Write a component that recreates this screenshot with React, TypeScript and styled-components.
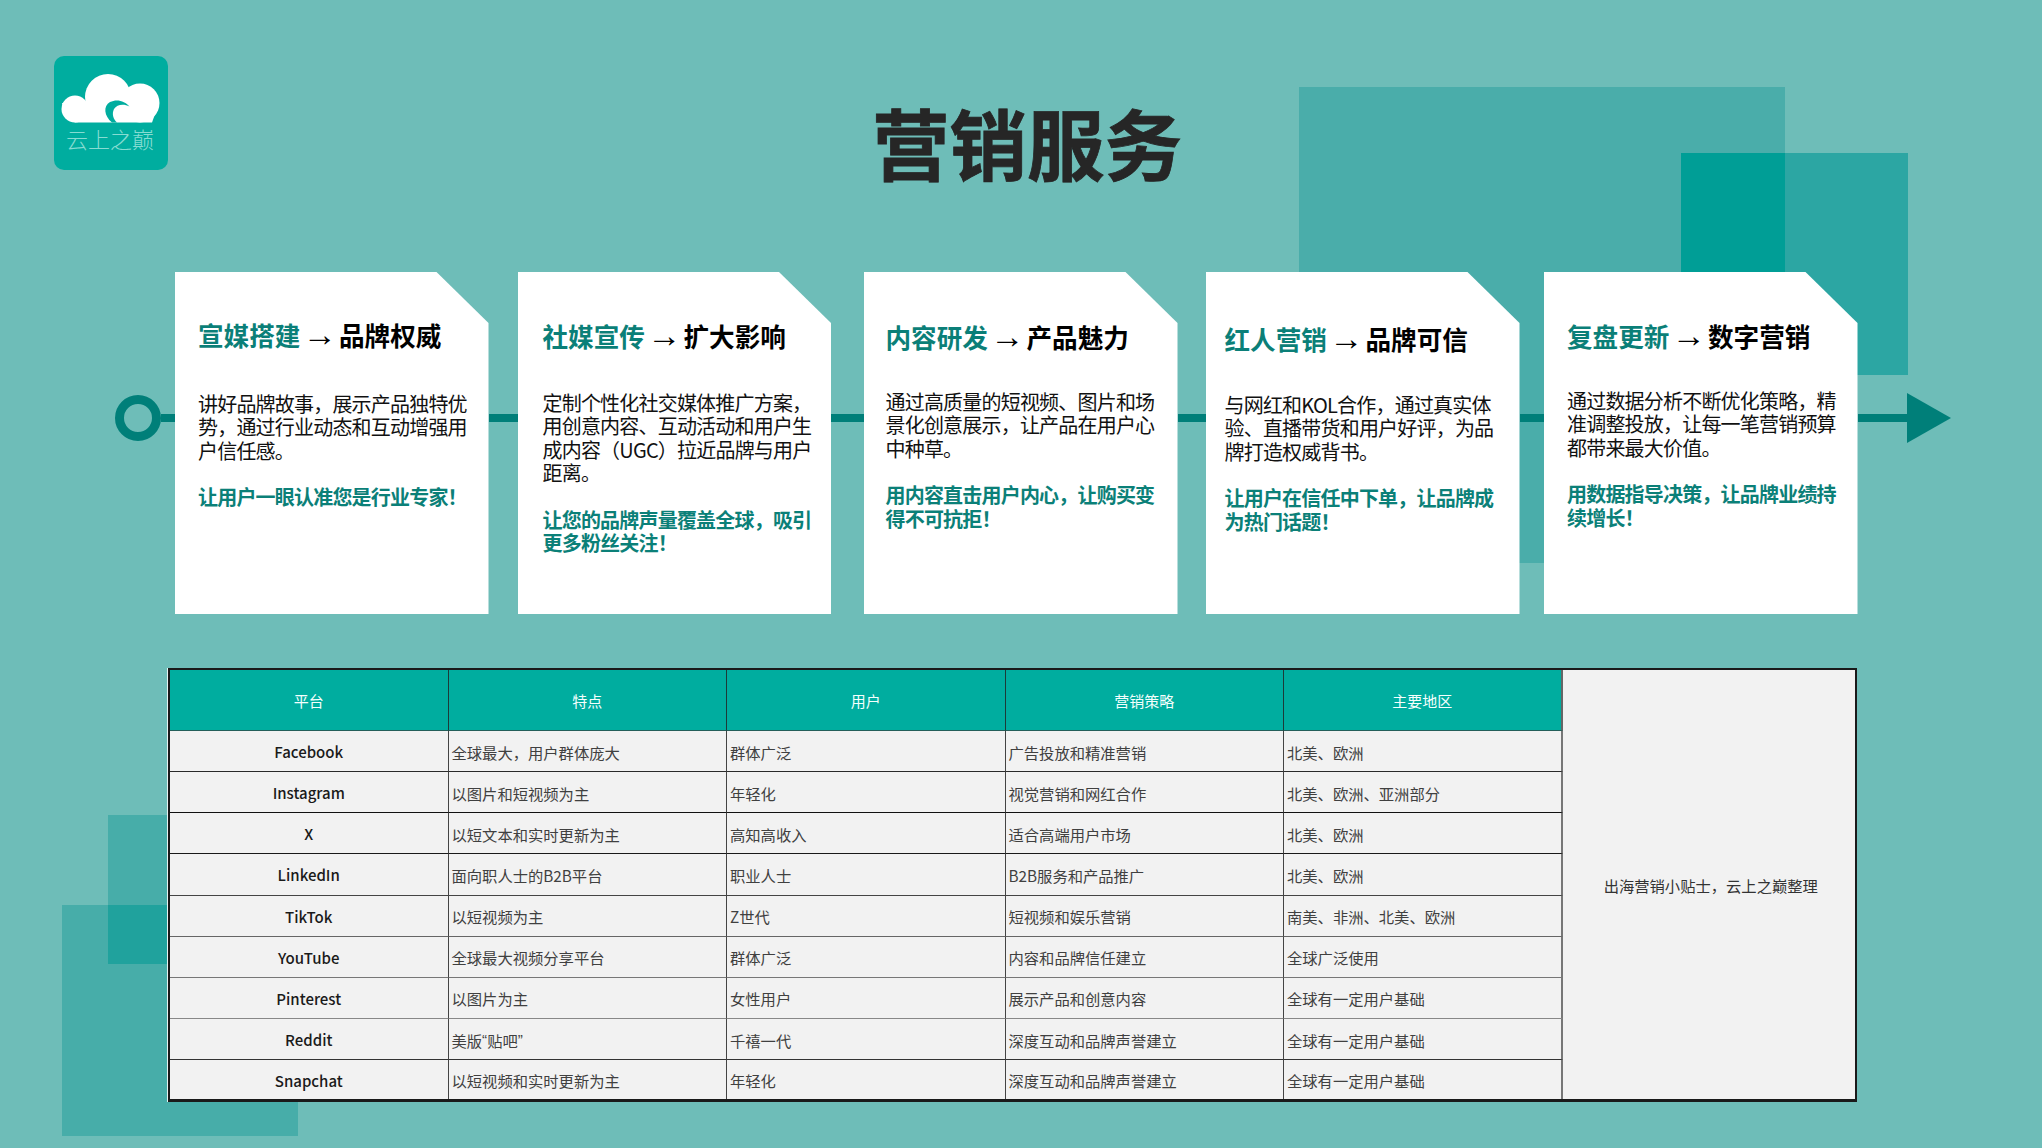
import React from "react";
import styled, { createGlobalStyle } from "styled-components";

const Global = createGlobalStyle`
  html, body { margin: 0; padding: 0; background: #6ebdb8; }
  * { box-sizing: border-box; }
  body { font-family: "Noto Sans CJK SC", "Noto Sans", sans-serif; }
`;

const Page = styled.div`
  position: relative;
  width: 2042px;
  height: 1148px;
  overflow: hidden;
  background: #6ebdb8;
`;

const Square = styled.div<{ $x: number; $y: number; $w: number; $h: number; $c: string }>`
  position: absolute;
  left: ${(p) => p.$x}px;
  top: ${(p) => p.$y}px;
  width: ${(p) => p.$w}px;
  height: ${(p) => p.$h}px;
  background: ${(p) => p.$c};
`;

const Content = styled.div`
  position: relative;
  display: flex;
  flex-direction: column;
`;

const Header = styled.header`
  display: flex;
  align-items: flex-start;
  height: 272px;
  padding: 56px 0 0 54px;
`;

const LogoBox = styled.div`
  width: 114px;
  height: 114px;
  border-radius: 10px;
  background: #00ad9f;
  display: flex;
  flex-direction: column;
  align-items: center;
  flex: none;
`;

const LogoMark = styled.svg`
  width: 114px;
  height: 68px;
  display: block;
  flex: none;
`;

const LogoText = styled.div`
  margin: -1px 2px 0 0;
  font-size: 22px;
  line-height: 30px;
  font-weight: 300;
  color: #86dcd2;
  white-space: nowrap;
`;

const Title = styled.h1`
  margin: 31px 0 0 704px;
  font-size: 77.5px;
  line-height: 108px;
  font-weight: 700;
  color: #262626;
  -webkit-text-stroke: 0.8px #262626;
  white-space: nowrap;
`;

const Rail = styled.section`
  display: flex;
  align-items: flex-start;
  height: 342px;
  padding-left: 115px;
`;

const Ring = styled.div`
  flex: none;
  width: 46px;
  height: 46px;
  margin-top: 123px;
  border: 9px solid #007f79;
  border-radius: 50%;
`;

const Connector = styled.div<{ $w: number }>`
  flex: none;
  width: ${(p) => p.$w}px;
  height: 8px;
  margin-top: 142px;
  background: #007f79;
`;

const ArrowHead = styled.div`
  flex: none;
  width: 44px;
  height: 50px;
  margin-top: 121px;
  background: #007f79;
  clip-path: polygon(0 0, 100% 50%, 0 100%);
`;

const Card = styled.article<{ $x: number; $y: number }>`
  flex: none;
  width: 313.5px;
  height: 342px;
  padding: ${(p) => p.$y}px 0 0 ${(p) => p.$x}px;
  background: #fff;
  clip-path: polygon(0 0, 261.5px 0, 100% 51px, 100% 100%, 0 100%);
`;

const CardHead = styled.h2`
  margin: 0;
  font-size: 25.6px;
  line-height: 36px;
  font-weight: 700;
  color: #000;
  white-space: nowrap;
`;

const Accent = styled.span`
  color: #0b7f78;
`;

const Arrow = styled.span`
  display: inline-block;
  margin: 0 -3.5px;
  font-family: "Liberation Sans", sans-serif;
  font-size: 34px;
  line-height: 0;
  font-weight: 400;
`;

const CardBody = styled.p<{ $top: number }>`
  margin: ${(p) => p.$top}px 0 0;
  font-size: 20px;
  line-height: 23.4px;
  letter-spacing: -0.8px;
  color: #111;
  white-space: pre-line;
`;

const CardNote = styled.p`
  margin: 23px 0 0;
  font-size: 20px;
  line-height: 23.4px;
  letter-spacing: -0.8px;
  font-weight: 700;
  color: #0b8078;
  white-space: pre-line;
`;

const Sheet = styled.section`
  display: grid;
  grid-template-columns: repeat(5, 278.5px) 1fr;
  grid-template-rows: 61px repeat(8, 41.15px) 1fr;
  width: 1689px;
  height: 434px;
  margin: 54px 0 0 168px;
  border-style: solid;
  border-color: #1a1a1a;
  border-width: 2px 2px 3px 2px;
  box-shadow: -1px 0 0 #e6f2f1;
  background: #f2f2f2;
`;

const HeadCell = styled.div<{ $last?: boolean }>`
  display: flex;
  align-items: center;
  justify-content: center;
  background: #00ad9f;
  color: #f4fffd;
  font-size: 15px;
  border-right: ${(p) => (p.$last ? "2px solid #666" : "1px solid #1c3a38")};
  border-bottom: 1.5px solid #245f5a;
`;

const Cell = styled.div<{ $lead?: boolean; $line: string; $last?: boolean; $edge?: boolean }>`
  display: flex;
  align-items: center;
  justify-content: ${(p) => (p.$lead ? "center" : "flex-start")};
  padding: 1px 0 0 ${(p) => (p.$lead ? 0 : 3)}px;
  font-size: ${(p) => (p.$lead ? 15 : 15.3)}px;
  font-weight: ${(p) => (p.$lead ? 500 : 400)};
  color: ${(p) => (p.$lead ? "#1a1a1a" : "#404040")};
  white-space: nowrap;
  border-right: ${(p) => (p.$edge ? "2px solid #777" : "1px solid #444")};
  border-bottom: ${(p) => (p.$last ? "none" : `1px solid ${p.$line}`)};
`;

const Quote = styled.span`
  font-family: "Liberation Sans", sans-serif;
`;

const SideNote = styled.div`
  grid-column: 6;
  grid-row: 1 / -1;
  display: flex;
  align-items: center;
  justify-content: center;
  padding: 0 0 0 4px;
  font-size: 15.3px;
  color: #333;
`;

const cards = [
  { x: 23, y: 45, top: 39, a: "宣媒搭建", b: "品牌权威", body: "讲好品牌故事，展示产品独特优\n势，通过行业动态和互动增强用\n户信任感。", note: "让用户一眼认准您是行业专家！" },
  { x: 25, y: 46, top: 37, a: "社媒宣传", b: "扩大影响", body: "定制个性化社交媒体推广方案，\n用创意内容、互动活动和用户生\n成内容（UGC）拉近品牌与用户\n距离。", note: "让您的品牌声量覆盖全球，吸引\n更多粉丝关注！" },
  { x: 21.5, y: 47, top: 35, a: "内容研发", b: "产品魅力", body: "通过高质量的短视频、图片和场\n景化创意展示，让产品在用户心\n中种草。", note: "用内容直击用户内心，让购买变\n得不可抗拒！" },
  { x: 18.5, y: 49, top: 36, a: "红人营销", b: "品牌可信", body: "与网红和KOL合作，通过真实体\n验、直播带货和用户好评，为品\n牌打造权威背书。", note: "让用户在信任中下单，让品牌成\n为热门话题！" },
  { x: 23, y: 46, top: 35, a: "复盘更新", b: "数字营销", body: "通过数据分析不断优化策略，精\n准调整投放，让每一笔营销预算\n都带来最大价值。", note: "用数据指导决策，让品牌业绩持\n续增长！" },
];

const links = [29, 33, 28.5, 24.5];

const heads = ["平台", "特点", "用户", "营销策略", "主要地区"];

const rows = [
  { line: "#2a2a2a", c: ["Facebook", "全球最大，用户群体庞大", "群体广泛", "广告投放和精准营销", "北美、欧洲"] },
  { line: "#111", c: ["Instagram", "以图片和短视频为主", "年轻化", "视觉营销和网红合作", "北美、欧洲、亚洲部分"] },
  { line: "#1a1a1a", c: ["X", "以短文本和实时更新为主", "高知高收入", "适合高端用户市场", "北美、欧洲"] },
  { line: "#444", c: ["LinkedIn", "面向职人士的B2B平台", "职业人士", "B2B服务和产品推广", "北美、欧洲"] },
  { line: "#666", c: ["TikTok", "以短视频为主", "Z世代", "短视频和娱乐营销", "南美、非洲、北美、欧洲"] },
  { line: "#777", c: ["YouTube", "全球最大视频分享平台", "群体广泛", "内容和品牌信任建立", "全球广泛使用"] },
  { line: "#888", c: ["Pinterest", "以图片为主", "女性用户", "展示产品和创意内容", "全球有一定用户基础"] },
  { line: "#333", c: ["Reddit", <>美版<Quote>“</Quote>贴吧<Quote>”</Quote></>, "千禧一代", "深度互动和品牌声誉建立", "全球有一定用户基础"] },
  { line: "#000", c: ["Snapchat", "以短视频和实时更新为主", "年轻化", "深度互动和品牌声誉建立", "全球有一定用户基础"] },
];

export default function App() {
  return (
    <Page>
      <Global />
      <Square $x={1299} $y={87} $w={486} $h={476} $c="#4aadaa" />
      <Square $x={1681} $y={153} $w={227} $h={222} $c="#2ca6a3" />
      <Square $x={1681} $y={153} $w={104} $h={222} $c="#009e96" />
      <Square $x={108} $y={815} $w={120} $h={149} $c="#47ada9" />
      <Square $x={62} $y={905} $w={236} $h={231} $c="#47ada9" />
      <Square $x={108} $y={905} $w={120} $h={59} $c="#20a29d" />
      <Content>
        <Header>
          <LogoBox>
            <LogoMark viewBox="0 0 114 68">
              <circle cx="21" cy="53" r="13.5" fill="#fff" />
              <circle cx="54" cy="41" r="23" fill="#fff" />
              <circle cx="86" cy="47" r="19.5" fill="#fff" />
              <path d="M21 66.5H98L105 47H8L12 60Z" fill="#fff" />
              <path d="M58 66.5C50 60 49 50 56 46C63 42.5 71 45 75.5 50.5C70 47.5 63 48 60 53C57.5 58 59.5 63.5 63 66.5Z" fill="#00ad9f" />
            </LogoMark>
            <LogoText>云上之巅</LogoText>
          </LogoBox>
          <Title>营销服务</Title>
        </Header>
        <Rail>
          <Ring />
          <Connector $w={14} />
          {cards.map((c, i) => (
            <React.Fragment key={c.a}>
              <Card $x={c.x} $y={c.y}>
                <CardHead>
                  <Accent>{c.a}</Accent> <Arrow>→</Arrow> {c.b}
                </CardHead>
                <CardBody $top={c.top}>{c.body}</CardBody>
                <CardNote>{c.note}</CardNote>
              </Card>
              {i < links.length && <Connector $w={links[i]} />}
            </React.Fragment>
          ))}
          <Connector $w={49.5} />
          <ArrowHead />
        </Rail>
        <Sheet>
          {heads.map((h, i) => (
            <HeadCell key={h} $last={i === heads.length - 1}>{h}</HeadCell>
          ))}
          <SideNote>出海营销小贴士，云上之巅整理</SideNote>
          {rows.map((r, ri) =>
            r.c.map((t, i) => (
              <Cell
                key={`${ri}-${i}`}
                $lead={i === 0}
                $line={r.line}
                $edge={i === 4}
                $last={ri === rows.length - 1}
              >
                {t}
              </Cell>
            ))
          )}
        </Sheet>
      </Content>
    </Page>
  );
}
